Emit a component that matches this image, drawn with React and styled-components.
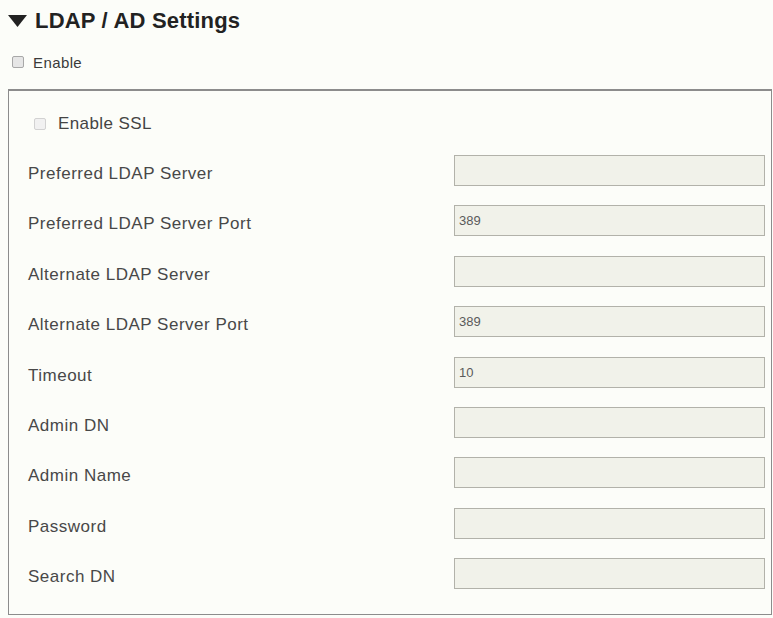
import { Fragment } from "react";
import styled, { createGlobalStyle } from "styled-components";

const GlobalStyle = createGlobalStyle`
  body {
    margin: 0;
    background: #fcfdf9;
    font-family: "Liberation Sans", Arial, sans-serif;
  }
`;

const fields = [
  { label: "Preferred LDAP Server", value: "" },
  { label: "Preferred LDAP Server Port", value: "389" },
  { label: "Alternate LDAP Server", value: "" },
  { label: "Alternate LDAP Server Port", value: "389" },
  { label: "Timeout", value: "10" },
  { label: "Admin DN", value: "" },
  { label: "Admin Name", value: "" },
  { label: "Password", value: "" },
  { label: "Search DN", value: "" },
];

const Page = styled.div`
  width: 773px;
  padding-top: 8px;
`;

const Title = styled.h2`
  display: flex;
  align-items: center;
  gap: 8px;
  margin: 0 0 0 8px;
  height: 26px;
  font-size: 22px;
  line-height: 26px;
  font-weight: bold;
  letter-spacing: 0.2px;
  color: #222;
`;

const CheckRow = styled.label`
  display: flex;
  align-items: center;
  gap: ${(p) => p.gap}px;
  height: 20px;
  font-size: ${(p) => p.size}px;
  letter-spacing: 0.4px;
  color: ${(p) => p.color};
`;

const TopCheck = styled(CheckRow)`
  margin: 18px 0 0 12px;
`;

const Box = styled.span`
  display: inline-block;
  width: 12px;
  height: 12px;
  box-sizing: border-box;
  border: 1px solid ${(p) => (p.faded ? "#d2d2d2" : "#a8a8a8")};
  border-radius: 2px;
  background: ${(p) => (p.faded ? "#f1f1f1" : "#e6e6e6")};
`;

const Panel = styled.div`
  margin: 17px 0 0 8px;
  width: 764px;
  box-sizing: border-box;
  border: 1px solid #8c8c8c;
  border-top-width: 2px;
  padding: 23px 6px 25px 19px;
`;

const SslRow = styled(CheckRow)`
  margin-left: 6px;
`;

const Grid = styled.div`
  display: grid;
  grid-template-columns: 1fr 311px;
  row-gap: 19.4px;
  margin-top: 21px;
`;

const Label = styled.div`
  padding-top: 9px;
  font-size: 17px;
  line-height: 20px;
  letter-spacing: 0.5px;
  color: #484848;
`;

const Input = styled.input`
  height: 31px;
  box-sizing: border-box;
  border: 1px solid #b2b2aa;
  background: #f1f2ea;
  padding: 0 4px;
  font-family: "Liberation Sans", Arial, sans-serif;
  font-size: 13px;
  color: #5a5a5a;
  outline: none;
`;

const Caret = () => (
  <svg width="19" height="12" viewBox="0 0 19 12">
    <path d="M0 0 H19 L9.5 12 Z" fill="#222" />
  </svg>
);

export default function App() {
  return (
    <Page>
      <GlobalStyle />
      <Title>
        <Caret />
        LDAP / AD Settings
      </Title>
      <TopCheck gap={9} size={15} color="#3a3a3a">
        <Box />
        Enable
      </TopCheck>
      <Panel>
        <SslRow gap={12} size={17} color="#444">
          <Box faded />
          Enable SSL
        </SslRow>
        <Grid>
          {fields.map((f) => (
            <Fragment key={f.label}>
              <Label>{f.label}</Label>
              <Input value={f.value} readOnly />
            </Fragment>
          ))}
        </Grid>
      </Panel>
    </Page>
  );
}
